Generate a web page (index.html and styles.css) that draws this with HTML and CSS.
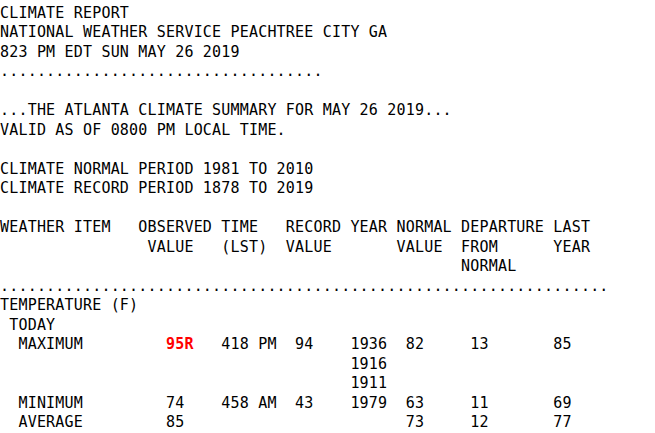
FILE: index.html
```
<!DOCTYPE html>
<html>
<head>
<meta charset="utf-8">
<link rel="stylesheet" href="styles.css">
</head>
<body>
<pre class="report">CLIMATE REPORT
NATIONAL WEATHER SERVICE PEACHTREE CITY GA
823 PM EDT SUN MAY 26 2019
...................................

...THE ATLANTA CLIMATE SUMMARY FOR MAY 26 2019...
VALID AS OF 0800 PM LOCAL TIME.

CLIMATE NORMAL PERIOD 1981 TO 2010
CLIMATE RECORD PERIOD 1878 TO 2019

WEATHER ITEM   OBSERVED TIME   RECORD YEAR NORMAL DEPARTURE LAST
                VALUE   (LST)  VALUE       VALUE  FROM      YEAR
                                                  NORMAL
..................................................................
TEMPERATURE (F)
 TODAY
  MAXIMUM         <span class="record">95R</span>   418 PM  94    1936  82     13       85
                                      1916
                                      1911
  MINIMUM         74    458 AM  43    1979  63     11       69
  AVERAGE         85                        73     12       77
</pre>
</body>
</html>
```
FILE: styles.css
```
html, body {
  margin: 0;
  padding: 0;
  background: #ffffff;
}

.report {
  margin: 0;
  padding: 3.5px 0 0 0;
  font-family: "DejaVu Sans Mono", "Liberation Mono", monospace;
  font-size: 15px;
  letter-spacing: 0.19px;
  line-height: 19.52px;
  color: #000000;
}

.record {
  color: #ff0000;
  font-weight: bold;
}
```
